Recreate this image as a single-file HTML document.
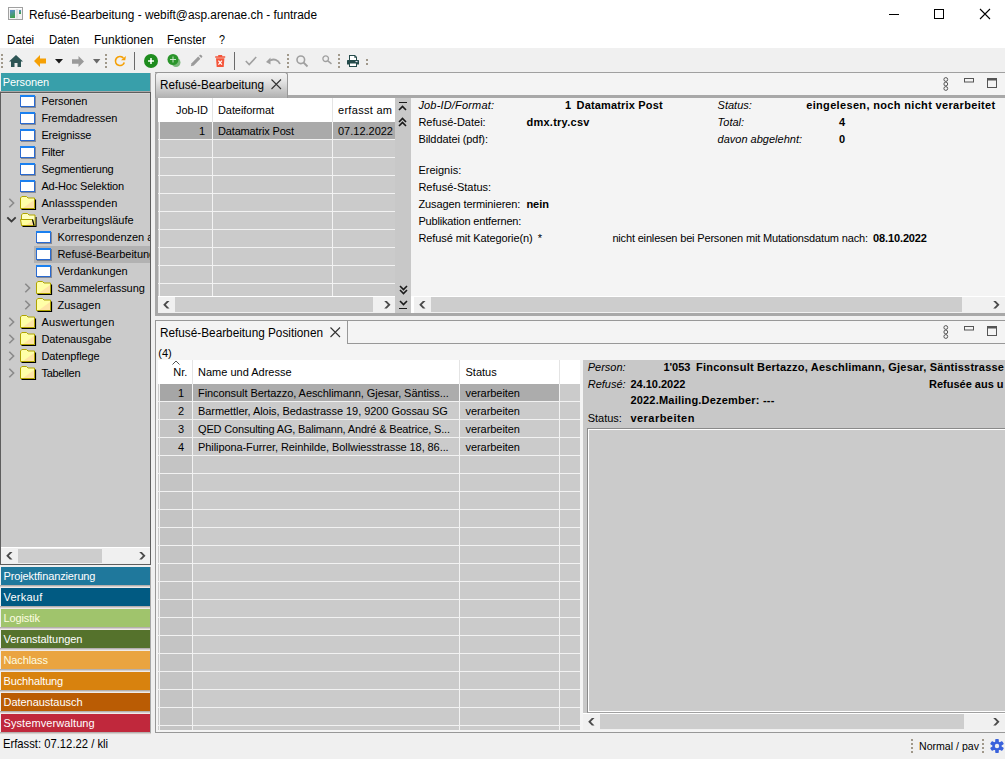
<!DOCTYPE html><html><head><meta charset="utf-8"><style>
html,body{margin:0;padding:0;}
body{width:1005px;height:759px;position:relative;overflow:hidden;background:#f0f0f0;font-family:"Liberation Sans",sans-serif;}
body *{position:absolute;} svg *{position:static;}
.t{white-space:pre;}
svg{overflow:visible;}
</style></head><body>
<div style="left:0px;top:0px;width:1005px;height:30px;background:#ffffff;"></div>
<svg style="left:8px;top:7px;" width="16" height="14" viewBox="0 0 16 14"><defs><linearGradient id="ig" x1="0" y1="0" x2="0.3" y2="1"><stop offset="0" stop-color="#5a8ad0"/><stop offset="1" stop-color="#40a050"/></linearGradient></defs><rect x="0.5" y="0.5" width="14" height="12" fill="#f2f2f2" stroke="#a0a0a0"/><rect x="1" y="1" width="13" height="1" fill="#fff"/><rect x="2" y="3" width="5" height="8" fill="url(#ig)"/><rect x="8" y="2" width="2" height="9.5" fill="#e0e0e0"/><rect x="11" y="3" width="2" height="4" fill="url(#ig)"/></svg>
<span class="t" style="transform:scaleX(0.9874);transform-origin:0 0;left:29px;top:9.14px;font-size:12px;line-height:13.404px;color:#000;">Refusé-Bearbeitung - webift@asp.arenae.ch - funtrade</span>
<div style="left:889px;top:14px;width:10px;height:1px;background:#000;"></div>
<div style="left:934px;top:9px;width:10px;height:10px;border:1px solid #000;box-sizing:border-box;"></div>
<svg style="left:979px;top:8px;" width="12" height="12" viewBox="0 0 12 12"><path d="M1 1L11 11M11 1L1 11" stroke="#000" stroke-width="1.1"/></svg>
<div style="left:0px;top:30px;width:1005px;height:18px;background:#ffffff;"></div>
<span class="t" style="transform:scaleX(0.9709);transform-origin:0 0;left:7px;top:33.64px;font-size:12px;line-height:13.404px;color:#000;">Datei</span>
<span class="t" style="transform:scaleX(0.9460);transform-origin:0 0;left:49px;top:33.64px;font-size:12px;line-height:13.404px;color:#000;">Daten</span>
<span class="t" style="transform:scaleX(1.0004);transform-origin:0 0;left:93.6px;top:33.64px;font-size:12px;line-height:13.404px;color:#000;">Funktionen</span>
<span class="t" style="transform:scaleX(0.9512);transform-origin:0 0;left:167px;top:33.64px;font-size:12px;line-height:13.404px;color:#000;">Fenster</span>
<span class="t" style="transform:scaleX(0.8972);transform-origin:0 0;left:219px;top:33.64px;font-size:12px;line-height:13.404px;color:#000;">?</span>
<div style="left:0px;top:48px;width:1005px;height:24px;background:#f0f0f0;"></div>
<div style="left:1px;top:54px;width:2px;height:2px;background:#a0988a;"></div>
<div style="left:1px;top:58px;width:2px;height:2px;background:#a0988a;"></div>
<div style="left:1px;top:62px;width:2px;height:2px;background:#a0988a;"></div>
<div style="left:1px;top:66px;width:2px;height:2px;background:#a0988a;"></div>
<svg style="left:9px;top:55px;" width="14" height="12" viewBox="0 0 14 12"><path d="M7 0L0 6.5H2V12H5.5V8H8.5V12H12V6.5H14Z" fill="#2d5555"/></svg>
<svg style="left:34px;top:55px;" width="12" height="12" viewBox="0 0 12 12"><path d="M0 6L6 0V3.5H12V8.5H6V12Z" fill="#f5a005"/></svg>
<svg style="left:55px;top:59px;" width="8" height="5" viewBox="0 0 8 5"><path d="M0 0H8L4 4.5Z" fill="#1a1a1a"/></svg>
<svg style="left:72px;top:55.5px;" width="12" height="11" viewBox="0 0 12 11"><path d="M12 5.5L6.5 0V3.2H0V7.8H6.5V11Z" fill="#9a9a9a"/></svg>
<svg style="left:92.7px;top:58.5px;" width="8" height="5" viewBox="0 0 8 5"><path d="M0 0H7.4L3.7 4.5Z" fill="#6a6a6a"/></svg>
<div style="left:105px;top:54px;width:2px;height:2px;background:#a0988a;"></div>
<div style="left:105px;top:58px;width:2px;height:2px;background:#a0988a;"></div>
<div style="left:105px;top:62px;width:2px;height:2px;background:#a0988a;"></div>
<div style="left:105px;top:66px;width:2px;height:2px;background:#a0988a;"></div>
<svg style="left:114px;top:55px;" width="12" height="12" viewBox="0 0 12 12"><circle cx="6" cy="6" r="4.5" stroke="#f5a005" stroke-width="1.7" fill="none" stroke-dasharray="23 5.3" transform="rotate(18 6 6)"/><path d="M7.0 5.2L11.3 5.2L11.9 1.0Z" fill="#f5a005"/></svg>
<div style="left:134px;top:52px;width:1px;height:18px;background:#6a6a6a;"></div>
<svg style="left:144px;top:54px;" width="14" height="14" viewBox="0 0 14 14"><circle cx="7" cy="7" r="7" fill="#1e8c1e"/><path d="M7 4V10M4 7H10" stroke="#f4fff4" stroke-width="1.6"/><circle cx="7" cy="7" r="1.2" fill="#fff"/></svg>
<svg style="left:167px;top:54px;" width="14" height="14" viewBox="0 0 14 14"><circle cx="9" cy="8.5" r="4.5" fill="#7ab87a"/><circle cx="6" cy="5.5" r="5.5" fill="#2a952a"/><path d="M6 2.5V8.5M3 5.5H9" stroke="#d8ecd8" stroke-width="0.9"/></svg>
<svg style="left:190px;top:55px;" width="13" height="12" viewBox="0 0 13 12"><path d="M0.8 11.2L1.6 8.2L8.2 1.6L10.4 3.8L3.8 10.4Z" fill="#9a9a9a"/><path d="M9.0 0.8L10.0 -0.2Q10.6 -0.6 11.2 0L12.2 1Q12.6 1.6 12.2 2.0L11.2 3.0Z" fill="#9a9a9a"/></svg>
<svg style="left:215px;top:55px;" width="11" height="12" viewBox="0 0 11 12"><path d="M0.2 1.3H10.2V2.8H0.2Z M3.2 0H7.2V1.3H3.2Z M1 3.3H9.4L8.7 12H1.7Z" fill="#f4553a"/><path d="M3.4 5.6L6.9 9.6M6.9 5.6L3.4 9.6" stroke="#fff" stroke-width="1.3"/></svg>
<div style="left:234px;top:52px;width:1px;height:18px;background:#6a6a6a;"></div>
<svg style="left:245px;top:56px;" width="12" height="10" viewBox="0 0 12 10"><path d="M0.8 5L4.2 8.5L11.2 1" stroke="#a0a0a0" stroke-width="1.6" fill="none"/></svg>
<svg style="left:266px;top:57px;" width="15" height="8" viewBox="0 0 15 8"><path d="M4 3.5C8 1.5 12 2.5 14 7" stroke="#a0a0a0" stroke-width="1.8" fill="none"/><path d="M0 5L4.5 0.5V7.5Z" fill="#a0a0a0"/></svg>
<div style="left:287px;top:54px;width:2px;height:2px;background:#a0988a;"></div>
<div style="left:287px;top:58px;width:2px;height:2px;background:#a0988a;"></div>
<div style="left:287px;top:62px;width:2px;height:2px;background:#a0988a;"></div>
<div style="left:287px;top:66px;width:2px;height:2px;background:#a0988a;"></div>
<svg style="left:296px;top:55px;" width="12" height="12" viewBox="0 0 12 12"><circle cx="4.8" cy="4.8" r="3.8" stroke="#a0a0a0" stroke-width="1.6" fill="none"/><path d="M7.5 7.5L11.5 11.5" stroke="#a0a0a0" stroke-width="1.8"/></svg>
<svg style="left:322px;top:55px;" width="10" height="9" viewBox="0 0 10 9"><circle cx="3.7" cy="3.7" r="2.8" stroke="#a0a0a0" stroke-width="1.3" fill="none"/><path d="M5.8 5.8L9.5 8.8" stroke="#a0a0a0" stroke-width="1.5"/></svg>
<div style="left:338px;top:54px;width:2px;height:2px;background:#a0988a;"></div>
<div style="left:338px;top:58px;width:2px;height:2px;background:#a0988a;"></div>
<div style="left:338px;top:62px;width:2px;height:2px;background:#a0988a;"></div>
<div style="left:338px;top:66px;width:2px;height:2px;background:#a0988a;"></div>
<svg style="left:347px;top:55px;" width="12" height="12" viewBox="0 0 12 12"><path d="M2 0H8L10 2V5.5H2Z" fill="#244a4a"/><path d="M3 1H7.5L9 2.5V5H3Z" fill="#fff"/><path d="M7.3 0.8L9.2 2.7H7.3Z" fill="#244a4a"/><rect x="0" y="5" width="12" height="4.5" rx="0.6" fill="#244a4a"/><rect x="8.5" y="6" width="2" height="1.2" fill="#dde"/><rect x="2" y="7.5" width="8" height="4.5" fill="#244a4a"/><rect x="3" y="8.5" width="6" height="2.5" fill="#fff"/></svg>
<div style="left:366px;top:59px;width:2px;height:2px;background:#a0988a;"></div>
<div style="left:366px;top:63px;width:2px;height:2px;background:#a0988a;"></div>
<div style="left:0px;top:73px;width:151px;height:492px;background:#cbcbcb;border:1px solid #5e5e5e;box-sizing:border-box;"></div>
<div style="left:0px;top:73px;width:1px;height:18px;background:#f0ecea;"></div>
<div style="left:1px;top:73px;width:149px;height:18px;background:#389faa;"></div>
<div style="left:150px;top:73px;width:1px;height:18px;background:#a8a8a8;"></div>
<span class="t" style="letter-spacing:-0.099px;left:2.8px;top:75.84px;font-size:11px;line-height:12.287px;color:#fff;">Personen</span>
<div style="left:0px;top:91px;width:151px;height:1px;background:#a8a8a8;"></div>
<div style="left:0px;top:92px;width:151px;height:1px;background:#5e5e5e;"></div>
<div style="left:1px;top:93px;width:149px;height:1px;background:#d6d6d6;"></div>
<div class="c" style="left:1px;top:93px;width:149px;height:455px;overflow:hidden;">
<div style="left:33px;top:153px;width:116px;height:17px;background:#b2b2b2;"></div>
<svg style="left:19px;top:2px;" width="17" height="14" viewBox="0 0 17 14"><rect x="0" y="0" width="15" height="12" fill="#2a6ad0"/><rect x="0" y="0" width="15" height="2" fill="#1a80f0"/><rect x="1" y="2" width="13" height="9" fill="#fff"/><path d="M15.5 1.5V12.5H1.5" stroke="#404a60" stroke-width="1" fill="none" stroke-dasharray="1 1"/></svg>
<span class="t" style="letter-spacing:-0.156px;left:40.4px;top:1.54px;font-size:11px;line-height:12.287px;color:#000;">Personen</span>
<svg style="left:19px;top:19px;" width="17" height="14" viewBox="0 0 17 14"><rect x="0" y="0" width="15" height="12" fill="#2a6ad0"/><rect x="0" y="0" width="15" height="2" fill="#1a80f0"/><rect x="1" y="2" width="13" height="9" fill="#fff"/><path d="M15.5 1.5V12.5H1.5" stroke="#404a60" stroke-width="1" fill="none" stroke-dasharray="1 1"/></svg>
<span class="t" style="letter-spacing:-0.087px;left:40.4px;top:18.55px;font-size:11px;line-height:12.287px;color:#000;">Fremdadressen</span>
<svg style="left:19px;top:36px;" width="17" height="14" viewBox="0 0 17 14"><rect x="0" y="0" width="15" height="12" fill="#2a6ad0"/><rect x="0" y="0" width="15" height="2" fill="#1a80f0"/><rect x="1" y="2" width="13" height="9" fill="#fff"/><path d="M15.5 1.5V12.5H1.5" stroke="#404a60" stroke-width="1" fill="none" stroke-dasharray="1 1"/></svg>
<span class="t" style="letter-spacing:-0.151px;left:40.4px;top:35.55px;font-size:11px;line-height:12.287px;color:#000;">Ereignisse</span>
<svg style="left:19px;top:53px;" width="17" height="14" viewBox="0 0 17 14"><rect x="0" y="0" width="15" height="12" fill="#2a6ad0"/><rect x="0" y="0" width="15" height="2" fill="#1a80f0"/><rect x="1" y="2" width="13" height="9" fill="#fff"/><path d="M15.5 1.5V12.5H1.5" stroke="#404a60" stroke-width="1" fill="none" stroke-dasharray="1 1"/></svg>
<span class="t" style="letter-spacing:-0.211px;left:40.4px;top:52.55px;font-size:11px;line-height:12.287px;color:#000;">Filter</span>
<svg style="left:19px;top:70px;" width="17" height="14" viewBox="0 0 17 14"><rect x="0" y="0" width="15" height="12" fill="#2a6ad0"/><rect x="0" y="0" width="15" height="2" fill="#1a80f0"/><rect x="1" y="2" width="13" height="9" fill="#fff"/><path d="M15.5 1.5V12.5H1.5" stroke="#404a60" stroke-width="1" fill="none" stroke-dasharray="1 1"/></svg>
<span class="t" style="letter-spacing:-0.192px;left:40.4px;top:69.55px;font-size:11px;line-height:12.287px;color:#000;">Segmentierung</span>
<svg style="left:19px;top:87px;" width="17" height="14" viewBox="0 0 17 14"><rect x="0" y="0" width="15" height="12" fill="#2a6ad0"/><rect x="0" y="0" width="15" height="2" fill="#1a80f0"/><rect x="1" y="2" width="13" height="9" fill="#fff"/><path d="M15.5 1.5V12.5H1.5" stroke="#404a60" stroke-width="1" fill="none" stroke-dasharray="1 1"/></svg>
<span class="t" style="letter-spacing:-0.147px;left:40.4px;top:86.55px;font-size:11px;line-height:12.287px;color:#000;">Ad-Hoc Selektion</span>
<svg style="left:19px;top:103px;" width="17" height="14" viewBox="0 0 17 14"><path d="M1.5 13.5H15.5V3.5" stroke="#000" stroke-width="1.2" fill="none"/><path d="M0.5 12.5V2L1.8 0.5H6.5L8 2H14.5V12.5Z" fill="#ffffa8" stroke="#b0a400" stroke-width="1"/><path d="M3 12H14V4Z" fill="#ffd0a0" opacity="0.55"/></svg>
<svg style="left:6px;top:105px;" width="9" height="10" viewBox="0 0 9 10"><path d="M2.3 0.8L6.6 5L2.3 9.2" stroke="#8a8a8a" stroke-width="1.6" fill="none"/></svg>
<span class="t" style="letter-spacing:0.055px;left:40.4px;top:103.55px;font-size:11px;line-height:12.287px;color:#000;">Anlassspenden</span>
<svg style="left:19px;top:120px;" width="17" height="14" viewBox="0 0 17 14"><path d="M2.5 13.5H16V4" stroke="#000" stroke-width="1.2" fill="none"/><path d="M1.5 12.5V2L2.8 0.5H7.5L9 2H15V12.5Z" fill="#ffffc0" stroke="#b0a400" stroke-width="1"/><path d="M0.5 6.5H12.5L14 12.5H1.5Z" fill="#ffffa0" stroke="#b0a400" stroke-width="1"/><path d="M6 12H13.5L12.5 8Z" fill="#ffd0a0" opacity="0.6"/><path d="M12.5 6.5L14 12.5" stroke="#000" stroke-width="1.2"/></svg>
<svg style="left:5px;top:123px;" width="11" height="7" viewBox="0 0 11 7"><path d="M1.3 1.3L5.5 5.5L9.7 1.3" stroke="#3a3a3a" stroke-width="1.8" fill="none"/></svg>
<span class="t" style="letter-spacing:0.033px;left:40.4px;top:120.55px;font-size:11px;line-height:12.287px;color:#000;">Verarbeitungsläufe</span>
<svg style="left:35px;top:138px;" width="17" height="14" viewBox="0 0 17 14"><rect x="0" y="0" width="15" height="12" fill="#2a6ad0"/><rect x="0" y="0" width="15" height="2" fill="#1a80f0"/><rect x="1" y="2" width="13" height="9" fill="#fff"/><path d="M15.5 1.5V12.5H1.5" stroke="#404a60" stroke-width="1" fill="none" stroke-dasharray="1 1"/></svg>
<span class="t" style="left:56.4px;top:137.54px;font-size:11px;line-height:12.287px;color:#000;">Korrespondenzen a</span>
<svg style="left:35px;top:155px;" width="17" height="14" viewBox="0 0 17 14"><rect x="0" y="0" width="15" height="12" fill="#2a6ad0"/><rect x="0" y="0" width="15" height="2" fill="#1a80f0"/><rect x="1" y="2" width="13" height="9" fill="#fff"/><path d="M15.5 1.5V12.5H1.5" stroke="#404a60" stroke-width="1" fill="none" stroke-dasharray="1 1"/></svg>
<span class="t" style="left:56.4px;top:154.54px;font-size:11px;line-height:12.287px;color:#000;">Refusé-Bearbeitung</span>
<svg style="left:35px;top:172px;" width="17" height="14" viewBox="0 0 17 14"><rect x="0" y="0" width="15" height="12" fill="#2a6ad0"/><rect x="0" y="0" width="15" height="2" fill="#1a80f0"/><rect x="1" y="2" width="13" height="9" fill="#fff"/><path d="M15.5 1.5V12.5H1.5" stroke="#404a60" stroke-width="1" fill="none" stroke-dasharray="1 1"/></svg>
<span class="t" style="letter-spacing:-0.068px;left:56.4px;top:171.54px;font-size:11px;line-height:12.287px;color:#000;">Verdankungen</span>
<svg style="left:35px;top:188px;" width="17" height="14" viewBox="0 0 17 14"><path d="M1.5 13.5H15.5V3.5" stroke="#000" stroke-width="1.2" fill="none"/><path d="M0.5 12.5V2L1.8 0.5H6.5L8 2H14.5V12.5Z" fill="#ffffa8" stroke="#b0a400" stroke-width="1"/><path d="M3 12H14V4Z" fill="#ffd0a0" opacity="0.55"/></svg>
<svg style="left:22px;top:190px;" width="9" height="10" viewBox="0 0 9 10"><path d="M2.3 0.8L6.6 5L2.3 9.2" stroke="#8a8a8a" stroke-width="1.6" fill="none"/></svg>
<span class="t" style="letter-spacing:-0.090px;left:56.4px;top:188.54px;font-size:11px;line-height:12.287px;color:#000;">Sammelerfassung</span>
<svg style="left:35px;top:205px;" width="17" height="14" viewBox="0 0 17 14"><path d="M1.5 13.5H15.5V3.5" stroke="#000" stroke-width="1.2" fill="none"/><path d="M0.5 12.5V2L1.8 0.5H6.5L8 2H14.5V12.5Z" fill="#ffffa8" stroke="#b0a400" stroke-width="1"/><path d="M3 12H14V4Z" fill="#ffd0a0" opacity="0.55"/></svg>
<svg style="left:22px;top:207px;" width="9" height="10" viewBox="0 0 9 10"><path d="M2.3 0.8L6.6 5L2.3 9.2" stroke="#8a8a8a" stroke-width="1.6" fill="none"/></svg>
<span class="t" style="letter-spacing:0.065px;left:56.4px;top:205.54px;font-size:11px;line-height:12.287px;color:#000;">Zusagen</span>
<svg style="left:19px;top:222px;" width="17" height="14" viewBox="0 0 17 14"><path d="M1.5 13.5H15.5V3.5" stroke="#000" stroke-width="1.2" fill="none"/><path d="M0.5 12.5V2L1.8 0.5H6.5L8 2H14.5V12.5Z" fill="#ffffa8" stroke="#b0a400" stroke-width="1"/><path d="M3 12H14V4Z" fill="#ffd0a0" opacity="0.55"/></svg>
<svg style="left:6px;top:224px;" width="9" height="10" viewBox="0 0 9 10"><path d="M2.3 0.8L6.6 5L2.3 9.2" stroke="#8a8a8a" stroke-width="1.6" fill="none"/></svg>
<span class="t" style="letter-spacing:0.234px;left:40.4px;top:222.54px;font-size:11px;line-height:12.287px;color:#000;">Auswertungen</span>
<svg style="left:19px;top:239px;" width="17" height="14" viewBox="0 0 17 14"><path d="M1.5 13.5H15.5V3.5" stroke="#000" stroke-width="1.2" fill="none"/><path d="M0.5 12.5V2L1.8 0.5H6.5L8 2H14.5V12.5Z" fill="#ffffa8" stroke="#b0a400" stroke-width="1"/><path d="M3 12H14V4Z" fill="#ffd0a0" opacity="0.55"/></svg>
<svg style="left:6px;top:241px;" width="9" height="10" viewBox="0 0 9 10"><path d="M2.3 0.8L6.6 5L2.3 9.2" stroke="#8a8a8a" stroke-width="1.6" fill="none"/></svg>
<span class="t" style="letter-spacing:-0.124px;left:40.4px;top:239.54px;font-size:11px;line-height:12.287px;color:#000;">Datenausgabe</span>
<svg style="left:19px;top:256px;" width="17" height="14" viewBox="0 0 17 14"><path d="M1.5 13.5H15.5V3.5" stroke="#000" stroke-width="1.2" fill="none"/><path d="M0.5 12.5V2L1.8 0.5H6.5L8 2H14.5V12.5Z" fill="#ffffa8" stroke="#b0a400" stroke-width="1"/><path d="M3 12H14V4Z" fill="#ffd0a0" opacity="0.55"/></svg>
<svg style="left:6px;top:258px;" width="9" height="10" viewBox="0 0 9 10"><path d="M2.3 0.8L6.6 5L2.3 9.2" stroke="#8a8a8a" stroke-width="1.6" fill="none"/></svg>
<span class="t" style="letter-spacing:-0.113px;left:40.4px;top:256.55px;font-size:11px;line-height:12.287px;color:#000;">Datenpflege</span>
<svg style="left:19px;top:273px;" width="17" height="14" viewBox="0 0 17 14"><path d="M1.5 13.5H15.5V3.5" stroke="#000" stroke-width="1.2" fill="none"/><path d="M0.5 12.5V2L1.8 0.5H6.5L8 2H14.5V12.5Z" fill="#ffffa8" stroke="#b0a400" stroke-width="1"/><path d="M3 12H14V4Z" fill="#ffd0a0" opacity="0.55"/></svg>
<svg style="left:6px;top:275px;" width="9" height="10" viewBox="0 0 9 10"><path d="M2.3 0.8L6.6 5L2.3 9.2" stroke="#8a8a8a" stroke-width="1.6" fill="none"/></svg>
<span class="t" style="letter-spacing:-0.255px;left:40.4px;top:273.55px;font-size:11px;line-height:12.287px;color:#000;">Tabellen</span>
</div>
<div style="left:1px;top:547px;width:149px;height:1px;background:#ffffff;"></div>
<div style="left:1px;top:548px;width:149px;height:16px;background:#f0f0f0;"></div>
<div style="left:18px;top:549px;width:84px;height:14px;background:#cdcdcd;"></div>
<svg style="left:6px;top:551.5px;" width="7" height="8" viewBox="0 0 7 8"><path d="M6.5 0L2.8 3.75L6.5 7.5H3.9L0.2 3.75L3.9 0Z" fill="#4a4a4a"/></svg>
<svg style="left:139px;top:552px;" width="7" height="8" viewBox="0 0 7 8"><path d="M0.2 0L3.9 3.75L0.2 7.5H2.8L6.5 3.75L2.8 0Z" fill="#4a4a4a"/></svg>
<div style="left:1px;top:567px;width:149px;height:18px;background:#1f789c;"></div>
<div style="left:0px;top:585px;width:151px;height:1px;background:#b5b0ae;"></div>
<div style="left:0px;top:586px;width:151px;height:1px;background:#d4cfcd;"></div>
<div style="left:0px;top:587px;width:151px;height:1px;background:#f0ebe9;"></div>
<span class="t" style="letter-spacing:-0.121px;left:3.5px;top:570.04px;font-size:11px;line-height:12.287px;color:#fff;">Projektfinanzierung</span>
<div style="left:1px;top:588px;width:149px;height:18px;background:#015a82;"></div>
<div style="left:0px;top:606px;width:151px;height:1px;background:#b5b0ae;"></div>
<div style="left:0px;top:607px;width:151px;height:1px;background:#d4cfcd;"></div>
<div style="left:0px;top:608px;width:151px;height:1px;background:#f0ebe9;"></div>
<span class="t" style="letter-spacing:0.231px;left:3.5px;top:591.04px;font-size:11px;line-height:12.287px;color:#fff;">Verkauf</span>
<div style="left:1px;top:609px;width:149px;height:18px;background:#a0c46c;"></div>
<div style="left:0px;top:627px;width:151px;height:1px;background:#b5b0ae;"></div>
<div style="left:0px;top:628px;width:151px;height:1px;background:#d4cfcd;"></div>
<div style="left:0px;top:629px;width:151px;height:1px;background:#f0ebe9;"></div>
<span class="t" style="letter-spacing:-0.128px;left:3.5px;top:612.04px;font-size:11px;line-height:12.287px;color:#fdfde0;">Logistik</span>
<div style="left:1px;top:630px;width:149px;height:18px;background:#55722c;"></div>
<div style="left:0px;top:648px;width:151px;height:1px;background:#b5b0ae;"></div>
<div style="left:0px;top:649px;width:151px;height:1px;background:#d4cfcd;"></div>
<div style="left:0px;top:650px;width:151px;height:1px;background:#f0ebe9;"></div>
<span class="t" style="letter-spacing:-0.037px;left:3.5px;top:633.04px;font-size:11px;line-height:12.287px;color:#fff;">Veranstaltungen</span>
<div style="left:1px;top:651px;width:149px;height:18px;background:#eaa440;"></div>
<div style="left:0px;top:669px;width:151px;height:1px;background:#b5b0ae;"></div>
<div style="left:0px;top:670px;width:151px;height:1px;background:#d4cfcd;"></div>
<div style="left:0px;top:671px;width:151px;height:1px;background:#f0ebe9;"></div>
<span class="t" style="letter-spacing:-0.107px;left:3.5px;top:654.04px;font-size:11px;line-height:12.287px;color:#fdfde0;">Nachlass</span>
<div style="left:1px;top:672px;width:149px;height:18px;background:#d8820e;"></div>
<div style="left:0px;top:690px;width:151px;height:1px;background:#b5b0ae;"></div>
<div style="left:0px;top:691px;width:151px;height:1px;background:#d4cfcd;"></div>
<div style="left:0px;top:692px;width:151px;height:1px;background:#f0ebe9;"></div>
<span class="t" style="letter-spacing:-0.147px;left:3.5px;top:675.04px;font-size:11px;line-height:12.287px;color:#fff;">Buchhaltung</span>
<div style="left:1px;top:693px;width:149px;height:18px;background:#ba5c04;"></div>
<div style="left:0px;top:711px;width:151px;height:1px;background:#b5b0ae;"></div>
<div style="left:0px;top:712px;width:151px;height:1px;background:#d4cfcd;"></div>
<div style="left:0px;top:713px;width:151px;height:1px;background:#f0ebe9;"></div>
<span class="t" style="letter-spacing:-0.038px;left:3.5px;top:696.04px;font-size:11px;line-height:12.287px;color:#fff;">Datenaustausch</span>
<div style="left:1px;top:714px;width:149px;height:18px;background:#c0283c;"></div>
<div style="left:0px;top:732px;width:151px;height:1px;background:#b5b0ae;"></div>
<div style="left:0px;top:733px;width:151px;height:1px;background:#d4cfcd;"></div>
<div style="left:0px;top:734px;width:151px;height:1px;background:#f0ebe9;"></div>
<span class="t" style="letter-spacing:0.088px;left:3.5px;top:717.04px;font-size:11px;line-height:12.287px;color:#fff;">Systemverwaltung</span>
<div style="left:150px;top:567px;width:1px;height:166px;background:#a8a8a8;"></div>
<div style="left:155px;top:72px;width:850px;height:1px;background:#a0a0a0;"></div>
<div style="left:155px;top:73px;width:850px;height:22px;background:#f4f4f4;"></div>
<div style="left:155px;top:95px;width:850px;height:3px;background:#a8a8a8;"></div>
<div style="left:155px;top:98px;width:3px;height:218px;background:#a8a8a8;"></div>
<div style="left:155px;top:313px;width:850px;height:3px;background:#a8a8a8;"></div>
<div style="left:155px;top:72px;width:133px;height:26px;box-sizing:border-box;border:1px solid #989898;border-bottom:none;border-radius:3px 3px 0 0;background:linear-gradient(#f4f4f4,#e6e6e6 30%,#b0b0b0);"></div>
<span class="t" style="transform:scaleX(0.9744);transform-origin:0 0;left:159.6px;top:78.94px;font-size:12px;line-height:13.404px;color:#000;">Refusé-Bearbeitung</span>
<svg style="left:271px;top:79px;" width="11" height="11" viewBox="0 0 11 11"><path d="M0.5 0.5L10 10M10 0.5L0.5 10" stroke="#333" stroke-width="1.1"/></svg>
<svg style="left:943px;top:77px;" width="6" height="15" viewBox="0 0 6 15"><circle cx="2.8" cy="2.5" r="1.9" stroke="#555" stroke-width="1" fill="none"/><circle cx="2.8" cy="7" r="1.9" stroke="#555" stroke-width="1" fill="none"/><circle cx="2.8" cy="11.5" r="1.9" stroke="#555" stroke-width="1" fill="none"/></svg>
<svg style="left:963px;top:78px;" width="12" height="6" viewBox="0 0 12 6"><rect x="1.5" y="0.5" width="9" height="3.5" stroke="#555" stroke-width="1" fill="none"/></svg>
<svg style="left:986px;top:78px;" width="12" height="12" viewBox="0 0 12 12"><rect x="1.5" y="0.5" width="9" height="9" stroke="#555" stroke-width="1" fill="none"/><rect x="1.5" y="0.5" width="9" height="2" fill="#555"/></svg>
<div style="left:158px;top:98px;width:237px;height:24px;background:#ffffff;"></div>
<div style="left:158px;top:122px;width:237px;height:174px;background:#cbcbcb;"></div>
<div style="left:160px;top:122px;width:235px;height:17px;background:#aaaaaa;"></div>
<div style="left:158px;top:139px;width:237px;height:1px;background:#f2f2f2;"></div>
<div style="left:158px;top:157px;width:237px;height:1px;background:#f2f2f2;"></div>
<div style="left:158px;top:175px;width:237px;height:1px;background:#f2f2f2;"></div>
<div style="left:158px;top:193px;width:237px;height:1px;background:#f2f2f2;"></div>
<div style="left:158px;top:211px;width:237px;height:1px;background:#f2f2f2;"></div>
<div style="left:158px;top:229px;width:237px;height:1px;background:#f2f2f2;"></div>
<div style="left:158px;top:247px;width:237px;height:1px;background:#f2f2f2;"></div>
<div style="left:158px;top:265px;width:237px;height:1px;background:#f2f2f2;"></div>
<div style="left:158px;top:283px;width:237px;height:1px;background:#f2f2f2;"></div>
<div style="left:212px;top:98px;width:1px;height:24px;background:#e4e4e4;"></div>
<div style="left:212px;top:122px;width:1px;height:174px;background:#f2f2f2;"></div>
<div style="left:332px;top:98px;width:1px;height:24px;background:#e4e4e4;"></div>
<div style="left:332px;top:122px;width:1px;height:174px;background:#f2f2f2;"></div>
<div style="left:159px;top:122px;width:1px;height:174px;background:#f2f2f2;"></div>
<span class="t" style="letter-spacing:-0.081px;left:176px;top:104.05px;font-size:11px;line-height:12.287px;color:#000;">Job-ID</span>
<span class="t" style="letter-spacing:-0.086px;left:218px;top:104.05px;font-size:11px;line-height:12.287px;color:#000;">Dateiformat</span>
<span class="t" style="letter-spacing:0.293px;left:338px;top:104.05px;font-size:11px;line-height:12.287px;color:#000;">erfasst am</span>
<span class="t" style="left:199px;top:125.05px;font-size:11px;line-height:12.287px;color:#000;">1</span>
<span class="t" style="letter-spacing:-0.161px;left:218px;top:125.05px;font-size:11px;line-height:12.287px;color:#000;">Datamatrix Post</span>
<span class="t" style="letter-spacing:-0.007px;left:338px;top:125.05px;font-size:11px;line-height:12.287px;color:#000;">07.12.2022</span>
<div style="left:158px;top:296px;width:237px;height:1px;background:#ffffff;"></div>
<div style="left:158px;top:297px;width:237px;height:16px;background:#f0f0f0;"></div>
<div style="left:175px;top:297px;width:198px;height:15px;background:#cdcdcd;"></div>
<svg style="left:163px;top:300.5px;" width="7" height="8" viewBox="0 0 7 8"><path d="M6.5 0L2.8 3.75L6.5 7.5H3.9L0.2 3.75L3.9 0Z" fill="#4a4a4a"/></svg>
<svg style="left:384px;top:300.5px;" width="7" height="8" viewBox="0 0 7 8"><path d="M0.2 0L3.9 3.75L0.2 7.5H2.8L6.5 3.75L2.8 0Z" fill="#4a4a4a"/></svg>
<div style="left:395px;top:98px;width:16px;height:215px;background:#c8c8c8;"></div>
<div style="left:399px;top:102px;width:8px;height:1.4px;background:#1a1a1a;"></div>
<svg style="left:398.2px;top:104.5px;" width="9" height="6" viewBox="0 0 9 6"><path d="M1 5L4.5 1.5L8 5" stroke="#1a1a1a" stroke-width="1.6" fill="none"/></svg>
<svg style="left:398.2px;top:117px;" width="9" height="6" viewBox="0 0 9 6"><path d="M1 5L4.5 1.5L8 5" stroke="#1a1a1a" stroke-width="1.6" fill="none"/></svg>
<svg style="left:398.2px;top:121px;" width="9" height="6" viewBox="0 0 9 6"><path d="M1 5L4.5 1.5L8 5" stroke="#1a1a1a" stroke-width="1.6" fill="none"/></svg>
<svg style="left:398.5px;top:285px;" width="9" height="6" viewBox="0 0 9 6"><path d="M1 1L4.5 4.5L8 1" stroke="#1a1a1a" stroke-width="1.6" fill="none"/></svg>
<svg style="left:398.5px;top:289px;" width="9" height="6" viewBox="0 0 9 6"><path d="M1 1L4.5 4.5L8 1" stroke="#1a1a1a" stroke-width="1.6" fill="none"/></svg>
<svg style="left:398.5px;top:300px;" width="9" height="6" viewBox="0 0 9 6"><path d="M1 1L4.5 4.5L8 1" stroke="#1a1a1a" stroke-width="1.6" fill="none"/></svg>
<div style="left:399px;top:308px;width:8px;height:1.3px;background:#1a1a1a;"></div>
<div style="left:411px;top:98px;width:594px;height:198px;background:#f4f4f4;"></div>
<span class="t" style="letter-spacing:0.172px;left:418.4px;top:98.55px;font-size:11px;line-height:12.287px;color:#000;font-style:italic;">Job-ID/Format:</span>
<span class="t" style="left:565px;top:98.55px;font-size:11px;line-height:12.287px;color:#000;font-weight:bold;">1</span>
<span class="t" style="letter-spacing:0.160px;left:576.6px;top:98.55px;font-size:11px;line-height:12.287px;color:#000;font-weight:bold;">Datamatrix Post</span>
<span class="t" style="left:717.6px;top:98.84px;font-size:11px;line-height:12.287px;color:#000;font-style:italic;">Status:</span>
<span class="t" style="letter-spacing:0.337px;left:806.2px;top:98.84px;font-size:11px;line-height:12.287px;color:#000;font-weight:bold;">eingelesen, noch nicht verarbeitet</span>
<span class="t" style="left:418.4px;top:115.84px;font-size:11px;line-height:12.287px;color:#000;">Refusé-Datei:</span>
<span class="t" style="letter-spacing:0.267px;left:526.4px;top:115.84px;font-size:11px;line-height:12.287px;color:#000;font-weight:bold;">dmx.try.csv</span>
<span class="t" style="left:717.6px;top:115.84px;font-size:11px;line-height:12.287px;color:#000;font-style:italic;">Total:</span>
<span class="t" style="left:839px;top:115.84px;font-size:11px;line-height:12.287px;color:#000;font-weight:bold;">4</span>
<span class="t" style="letter-spacing:-0.089px;left:418.4px;top:132.84px;font-size:11px;line-height:12.287px;color:#000;">Bilddatei (pdf):</span>
<span class="t" style="left:717.6px;top:132.54px;font-size:11px;line-height:12.287px;color:#000;font-style:italic;">davon abgelehnt:</span>
<span class="t" style="left:839px;top:132.54px;font-size:11px;line-height:12.287px;color:#000;font-weight:bold;">0</span>
<span class="t" style="left:418.4px;top:163.64px;font-size:11px;line-height:12.287px;color:#000;">Ereignis:</span>
<span class="t" style="left:418.4px;top:180.64px;font-size:11px;line-height:12.287px;color:#000;">Refusé-Status:</span>
<span class="t" style="letter-spacing:-0.103px;left:418.4px;top:198.04px;font-size:11px;line-height:12.287px;color:#000;">Zusagen terminieren:</span>
<span class="t" style="left:526.4px;top:198.04px;font-size:11px;line-height:12.287px;color:#000;font-weight:bold;">nein</span>
<span class="t" style="letter-spacing:-0.163px;left:418.4px;top:215.04px;font-size:11px;line-height:12.287px;color:#000;">Publikation entfernen:</span>
<span class="t" style="letter-spacing:-0.081px;left:418.4px;top:232.04px;font-size:11px;line-height:12.287px;color:#000;">Refusé mit Kategorie(n)</span>
<span class="t" style="left:537.8px;top:232.04px;font-size:11px;line-height:12.287px;color:#000;">*</span>
<span class="t" style="letter-spacing:-0.168px;left:612.4px;top:232.04px;font-size:11px;line-height:12.287px;color:#000;">nicht einlesen bei Personen mit Mutationsdatum nach:</span>
<span class="t" style="letter-spacing:-0.118px;left:873px;top:232.04px;font-size:11px;line-height:12.287px;color:#000;font-weight:bold;">08.10.2022</span>
<div style="left:411px;top:296px;width:594px;height:17px;background:#ffffff;"></div>
<div style="left:414px;top:297px;width:591px;height:16px;background:#f0f0f0;"></div>
<div style="left:431px;top:297px;width:531px;height:15px;background:#cdcdcd;"></div>
<svg style="left:419px;top:300.5px;" width="7" height="8" viewBox="0 0 7 8"><path d="M6.5 0L2.8 3.75L6.5 7.5H3.9L0.2 3.75L3.9 0Z" fill="#4a4a4a"/></svg>
<svg style="left:992.5px;top:300.5px;" width="7" height="8" viewBox="0 0 7 8"><path d="M0.2 0L3.9 3.75L0.2 7.5H2.8L6.5 3.75L2.8 0Z" fill="#4a4a4a"/></svg>
<div style="left:155px;top:320px;width:850px;height:1px;background:#989898;"></div>
<div style="left:155px;top:321px;width:850px;height:412px;background:#f4f4f4;"></div>
<div style="left:347px;top:343px;width:658px;height:1px;background:#989898;"></div>
<div style="left:347px;top:320px;width:1px;height:24px;background:#989898;"></div>
<div style="left:155px;top:320px;width:1px;height:413px;background:#989898;"></div>
<div style="left:155px;top:732px;width:850px;height:1px;background:#989898;"></div>
<span class="t" style="transform:scaleX(0.9813);transform-origin:0 0;left:159.6px;top:326.94px;font-size:12px;line-height:13.404px;color:#000;">Refusé-Bearbeitung Positionen</span>
<svg style="left:330px;top:327px;" width="11" height="11" viewBox="0 0 11 11"><path d="M0.5 0.5L10 10M10 0.5L0.5 10" stroke="#333" stroke-width="1.1"/></svg>
<svg style="left:943px;top:325px;" width="6" height="15" viewBox="0 0 6 15"><circle cx="2.8" cy="2.5" r="1.9" stroke="#555" stroke-width="1" fill="none"/><circle cx="2.8" cy="7" r="1.9" stroke="#555" stroke-width="1" fill="none"/><circle cx="2.8" cy="11.5" r="1.9" stroke="#555" stroke-width="1" fill="none"/></svg>
<svg style="left:963px;top:326px;" width="12" height="6" viewBox="0 0 12 6"><rect x="1.5" y="0.5" width="9" height="3.5" stroke="#555" stroke-width="1" fill="none"/></svg>
<svg style="left:986px;top:326px;" width="12" height="12" viewBox="0 0 12 12"><rect x="1.5" y="0.5" width="9" height="9" stroke="#555" stroke-width="1" fill="none"/><rect x="1.5" y="0.5" width="9" height="2" fill="#555"/></svg>
<span class="t" style="left:158.3px;top:347.05px;font-size:11px;line-height:12.287px;color:#000;">(4)</span>
<div style="left:158px;top:360px;width:422px;height:370px;background:#cbcbcb;"></div>
<div style="left:158px;top:360px;width:422px;height:24px;background:#ffffff;"></div>
<div style="left:160px;top:384px;width:32px;height:346px;background:#c4c4c4;"></div>
<div style="left:160px;top:384px;width:32px;height:17px;background:#a6a6a6;"></div>
<div style="left:193px;top:384px;width:366px;height:17px;background:#acacac;"></div>
<div style="left:158px;top:401px;width:422px;height:1px;background:#f2f2f2;"></div>
<div style="left:158px;top:419px;width:422px;height:1px;background:#f2f2f2;"></div>
<div style="left:158px;top:437px;width:422px;height:1px;background:#f2f2f2;"></div>
<div style="left:158px;top:455px;width:422px;height:1px;background:#f2f2f2;"></div>
<div style="left:158px;top:473px;width:422px;height:1px;background:#f2f2f2;"></div>
<div style="left:158px;top:491px;width:422px;height:1px;background:#f2f2f2;"></div>
<div style="left:158px;top:509px;width:422px;height:1px;background:#f2f2f2;"></div>
<div style="left:158px;top:527px;width:422px;height:1px;background:#f2f2f2;"></div>
<div style="left:158px;top:545px;width:422px;height:1px;background:#f2f2f2;"></div>
<div style="left:158px;top:563px;width:422px;height:1px;background:#f2f2f2;"></div>
<div style="left:158px;top:581px;width:422px;height:1px;background:#f2f2f2;"></div>
<div style="left:158px;top:599px;width:422px;height:1px;background:#f2f2f2;"></div>
<div style="left:158px;top:617px;width:422px;height:1px;background:#f2f2f2;"></div>
<div style="left:158px;top:635px;width:422px;height:1px;background:#f2f2f2;"></div>
<div style="left:158px;top:653px;width:422px;height:1px;background:#f2f2f2;"></div>
<div style="left:158px;top:671px;width:422px;height:1px;background:#f2f2f2;"></div>
<div style="left:158px;top:689px;width:422px;height:1px;background:#f2f2f2;"></div>
<div style="left:158px;top:707px;width:422px;height:1px;background:#f2f2f2;"></div>
<div style="left:158px;top:725px;width:422px;height:1px;background:#f2f2f2;"></div>
<div style="left:192px;top:360px;width:1px;height:24px;background:#e4e4e4;"></div>
<div style="left:192px;top:384px;width:1px;height:346px;background:#f2f2f2;"></div>
<div style="left:459px;top:360px;width:1px;height:24px;background:#e4e4e4;"></div>
<div style="left:459px;top:384px;width:1px;height:346px;background:#f2f2f2;"></div>
<div style="left:559px;top:360px;width:1px;height:24px;background:#e4e4e4;"></div>
<div style="left:559px;top:384px;width:1px;height:346px;background:#f2f2f2;"></div>
<div style="left:159px;top:384px;width:1px;height:346px;background:#f2f2f2;"></div>
<svg style="left:172px;top:360px;" width="8" height="5" viewBox="0 0 8 5"><path d="M0.5 4.5L4 1L7.5 4.5" stroke="#555" stroke-width="1" fill="none"/></svg>
<span class="t" style="left:173.3px;top:366.05px;font-size:11px;line-height:12.287px;color:#000;">Nr.</span>
<span class="t" style="left:198px;top:366.05px;font-size:11px;line-height:12.287px;color:#000;">Name und Adresse</span>
<span class="t" style="left:465.5px;top:366.05px;font-size:11px;line-height:12.287px;color:#000;">Status</span>
<span class="t" style="left:178px;top:386.75px;font-size:11px;line-height:12.287px;color:#000;">1</span>
<span class="t" style="letter-spacing:-0.071px;left:198px;top:386.75px;font-size:11px;line-height:12.287px;color:#000;">Finconsult Bertazzo, Aeschlimann, Gjesar, Säntiss...</span>
<span class="t" style="letter-spacing:-0.055px;left:465.5px;top:386.75px;font-size:11px;line-height:12.287px;color:#000;">verarbeiten</span>
<span class="t" style="left:178px;top:404.75px;font-size:11px;line-height:12.287px;color:#000;">2</span>
<span class="t" style="letter-spacing:-0.057px;left:198px;top:404.75px;font-size:11px;line-height:12.287px;color:#000;">Barmettler, Alois, Bedastrasse 19, 9200 Gossau SG</span>
<span class="t" style="letter-spacing:-0.055px;left:465.5px;top:404.75px;font-size:11px;line-height:12.287px;color:#000;">verarbeiten</span>
<span class="t" style="left:178px;top:422.75px;font-size:11px;line-height:12.287px;color:#000;">3</span>
<span class="t" style="letter-spacing:-0.169px;left:198px;top:422.75px;font-size:11px;line-height:12.287px;color:#000;">QED Consulting AG, Balimann, André &amp; Beatrice, S...</span>
<span class="t" style="letter-spacing:-0.055px;left:465.5px;top:422.75px;font-size:11px;line-height:12.287px;color:#000;">verarbeiten</span>
<span class="t" style="left:178px;top:440.75px;font-size:11px;line-height:12.287px;color:#000;">4</span>
<span class="t" style="letter-spacing:-0.081px;left:198px;top:440.75px;font-size:11px;line-height:12.287px;color:#000;">Philipona-Furrer, Reinhilde, Bollwiesstrasse 18, 86...</span>
<span class="t" style="letter-spacing:-0.055px;left:465.5px;top:440.75px;font-size:11px;line-height:12.287px;color:#000;">verarbeiten</span>
<div style="left:583px;top:360px;width:422px;height:353px;background:#c8c8c8;"></div>
<span class="t" style="left:587.7px;top:360.94px;font-size:11px;line-height:12.287px;color:#000;font-style:italic;">Person:</span>
<span class="t" style="left:663.4px;top:360.94px;font-size:11px;line-height:12.287px;color:#000;font-weight:bold;">1'053</span>
<span class="t" style="letter-spacing:0.220px;left:696px;top:360.94px;font-size:11px;line-height:12.287px;color:#000;font-weight:bold;">Finconsult Bertazzo, Aeschlimann, Gjesar, Säntisstrasse</span>
<span class="t" style="left:587.7px;top:377.65px;font-size:11px;line-height:12.287px;color:#000;font-style:italic;">Refusé:</span>
<span class="t" style="left:630.4px;top:377.65px;font-size:11px;line-height:12.287px;color:#000;font-weight:bold;">24.10.2022</span>
<span class="t" style="left:929px;top:377.65px;font-size:11px;line-height:12.287px;color:#000;font-weight:bold;">Refusée aus u</span>
<span class="t" style="letter-spacing:0.209px;left:630.4px;top:394.35px;font-size:11px;line-height:12.287px;color:#000;font-weight:bold;">2022.Mailing.Dezember: ---</span>
<span class="t" style="left:587.7px;top:411.65px;font-size:11px;line-height:12.287px;color:#000;">Status:</span>
<span class="t" style="letter-spacing:0.469px;left:630.4px;top:411.65px;font-size:11px;line-height:12.287px;color:#000;font-weight:bold;">verarbeiten</span>
<div style="left:587px;top:428px;width:418px;height:285px;background:#cbcbcb;border-top:1px solid #8a8a8a;border-left:1px solid #8a8a8a;border-bottom:1px solid #a0a0a0;box-shadow:inset 1px 1px 0 #fff, inset 0 -1px 0 #fff;box-sizing:border-box;"></div>
<div style="left:583px;top:713px;width:422px;height:1px;background:#ffffff;"></div>
<div style="left:583px;top:714px;width:422px;height:16px;background:#f0f0f0;"></div>
<div style="left:600px;top:714px;width:364px;height:15px;background:#cdcdcd;"></div>
<svg style="left:588px;top:717.5px;" width="7" height="8" viewBox="0 0 7 8"><path d="M6.5 0L2.8 3.75L6.5 7.5H3.9L0.2 3.75L3.9 0Z" fill="#4a4a4a"/></svg>
<svg style="left:992.5px;top:717.5px;" width="7" height="8" viewBox="0 0 7 8"><path d="M0.2 0L3.9 3.75L0.2 7.5H2.8L6.5 3.75L2.8 0Z" fill="#4a4a4a"/></svg>
<span class="t" style="transform:scaleX(0.9075);transform-origin:0 0;left:3.2px;top:737.78px;font-size:12.4px;line-height:13.851px;color:#000;">Erfasst: 07.12.22 / kli</span>
<div style="left:911px;top:739px;width:2px;height:2px;background:#a0988a;"></div>
<div style="left:911px;top:743px;width:2px;height:2px;background:#a0988a;"></div>
<div style="left:911px;top:747px;width:2px;height:2px;background:#a0988a;"></div>
<div style="left:911px;top:751px;width:2px;height:2px;background:#a0988a;"></div>
<span class="t" style="transform:scaleX(0.9204);transform-origin:0 0;left:918.6px;top:739.59px;font-size:11.5px;line-height:12.845px;color:#000;">Normal / pav</span>
<div style="left:982px;top:739px;width:2px;height:2px;background:#a0988a;"></div>
<div style="left:982px;top:743px;width:2px;height:2px;background:#a0988a;"></div>
<div style="left:982px;top:747px;width:2px;height:2px;background:#a0988a;"></div>
<div style="left:982px;top:751px;width:2px;height:2px;background:#a0988a;"></div>
<svg style="left:990px;top:739px;" width="14" height="14" viewBox="0 0 14 14"><g transform="translate(7 7)" fill="#3a62dc"><circle r="4.6"/><rect x="-1.8" y="-7" width="3.6" height="14" rx="0.8"/><rect x="-1.8" y="-7" width="3.6" height="14" rx="0.8" transform="rotate(60)"/><rect x="-1.8" y="-7" width="3.6" height="14" rx="0.8" transform="rotate(120)"/></g><circle cx="7" cy="7" r="2.2" fill="#f0f0f0"/></svg>
</body></html>
